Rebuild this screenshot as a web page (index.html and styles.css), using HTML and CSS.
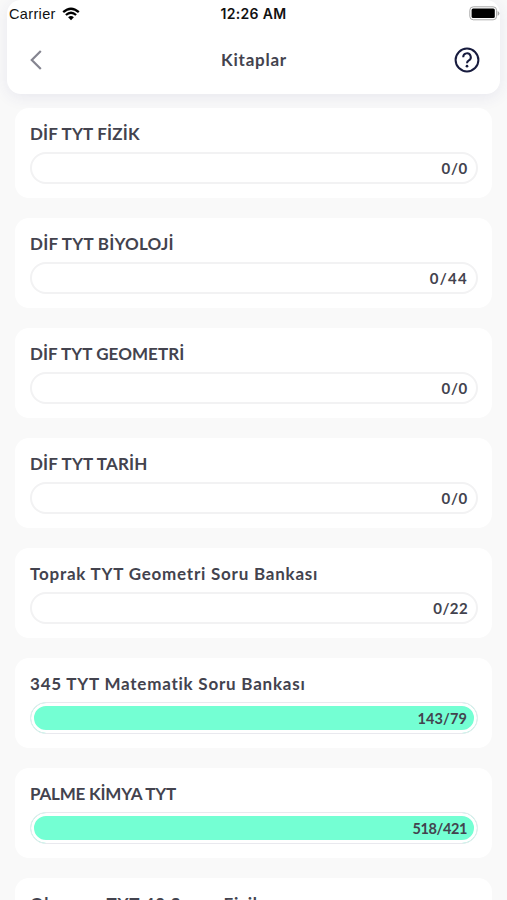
FILE: index.html
```html
<!DOCTYPE html>
<html lang="tr">
<head>
<meta charset="utf-8">
<title>Kitaplar</title>
<link rel="stylesheet" href="styles.css">
</head>
<body>
<header class="header">
  <div class="status">
    <div class="carrier"><span class="carrier-name">Carrier</span>
      <svg class="wifi" viewBox="0 0 18 14"><path d="M1.2 5.2Q9-1.7 16.8 5.2" /><path d="M3.9 8Q9 3.6 14.1 8"/><path class="solid" d="M9 13.2L6.1 10.3Q9 7.9 11.9 10.3Z"/></svg>
    </div>
    <span class="time">12:26 AM</span>
    <svg class="battery" viewBox="0 0 31 15"><rect class="shell" x=".8" y=".8" width="26.8" height="13" rx="3.5"/><rect class="charge" x="2.6" y="2.6" width="23.2" height="9.4" rx="1.5"/><path class="cap" d="M28.6 5Q30.4 5.8 30.4 7.4T28.6 9.8Z"/></svg>
  </div>
  <nav class="nav">
    <svg class="back" viewBox="0 0 12 20"><path d="M10.8 1L1.8 10L10.8 19"/></svg>
    <h1 class="title">Kitaplar</h1>
    <svg class="help" viewBox="0 0 26 26"><circle cx="13" cy="13" r="11.4"/><path d="M9.2 10.2A3.8 3.8 0 1 1 14.9 13.4C13.5 14.2 13 14.8 13 16.2"/><circle class="dot" cx="13" cy="19.2" r="1.35"/></svg>
  </nav>
</header>
<main class="list">
  <section class="card"><h2 class="name n1">DİF TYT FİZİK</h2><div class="bar"><span class="count">0/0</span></div></section>
  <section class="card"><h2 class="name n2">DİF TYT BİYOLOJİ</h2><div class="bar"><span class="count wide">0/44</span></div></section>
  <section class="card"><h2 class="name n3">DİF TYT GEOMETRİ</h2><div class="bar"><span class="count">0/0</span></div></section>
  <section class="card"><h2 class="name n1">DİF TYT TARİH</h2><div class="bar"><span class="count">0/0</span></div></section>
  <section class="card"><h2 class="name mixed">Toprak TYT Geometri Soru Bankası</h2><div class="bar"><span class="count snug">0/22</span></div></section>
  <section class="card"><h2 class="name mixed">345 TYT Matematik Soru Bankası</h2><div class="bar full"><span class="count tight">143/79</span></div></section>
  <section class="card"><h2 class="name n7">PALME KİMYA TYT</h2><div class="bar full"><span class="count tighter">518/421</span></div></section>
  <section class="card"><h2 class="name mixed">Okyanus TYT 40 Seans Fizik</h2></section>
</main>
</body>
</html>
```
FILE: styles.css
```css
* { box-sizing: border-box; }
body {
  display: flex;
  flex-direction: column;
  margin: 0;
  height: 900px;
  overflow: hidden;
  background: #f9f9f9;
  color: #43434e;
  font-family: Lato, "Noto Sans", sans-serif;
}
.header {
  flex: none;
  height: 94px;
  margin: 0 7px;
  background: #fff;
  border-radius: 14px;
  box-shadow: 0 3px 16px rgba(60, 60, 130, .09);
}
.status {
  display: grid;
  grid-template-columns: 1fr auto 1fr;
  align-items: center;
  height: 27px;
  padding-left: 2px;
  color: #111;
  font-family: Inter, sans-serif;
  font-size: 14px;
}
.carrier { display: flex; align-items: center; gap: 6px; }
.carrier-name { font-family: "Liberation Sans", sans-serif; font-size: 14.5px; letter-spacing: .35px; }
.wifi { width: 18px; height: 14px; fill: none; stroke: #000; stroke-width: 2.3; }
.wifi .solid { fill: #000; stroke: none; }
.time { margin-right: 2px; font-weight: 600; letter-spacing: .35px; }
.battery { justify-self: end; width: 31px; height: 15px; }
.shell { fill: #fff; stroke: #aaa; stroke-width: 1; }
.charge { fill: #000; }
.cap { fill: #aaa; }
.nav {
  display: grid;
  grid-template-columns: 1fr auto 1fr;
  align-items: center;
  height: 65px;
  padding: 0 20px 0 23px;
}
.back { width: 12px; height: 20px; fill: none; stroke: #858590; stroke-width: 2.2; }
.title { margin: 0 2px 0 0; font-size: 17px; font-weight: 700; letter-spacing: .75px; }
.help { justify-self: end; width: 26px; height: 26px; fill: none; stroke: #171b3e; stroke-width: 2; }
.help .dot { fill: #171b3e; stroke: none; }
.list {
  display: flex;
  flex: 1;
  flex-direction: column;
  gap: 20px;
  min-height: 0;
  padding: 14px 15px 0;
  overflow: hidden;
}
.card {
  flex: none;
  height: 90px;
  padding: 15px 14px 0 15px;
  background: #fff;
  border-radius: 14px;
}
.card:last-child { height: 22px; border-radius: 14px 14px 0 0; overflow: hidden; }
.name { margin: 0; height: 22px; line-height: 22px; font-size: 17px; font-weight: 700; white-space: nowrap; }
.n1 { letter-spacing: .18px; }
.n2 { letter-spacing: .24px; }
.n3 { letter-spacing: .05px; }
.n7 { letter-spacing: -.2px; }
.mixed { letter-spacing: .77px; }
.bar {
  display: flex;
  align-items: center;
  justify-content: flex-end;
  height: 32px;
  margin-top: 7px;
  padding-right: 8px;
  border: 2px solid #f2f2f3;
  border-radius: 16px;
}
.full { background: #74ffd3; border: 1px solid #e9e9ee; box-shadow: inset 0 0 0 3px #fff; padding-right: 10px; }
.count { font-size: 15px; font-weight: 700; letter-spacing: .7px; }
.wide { letter-spacing: 1.3px; }
.snug { letter-spacing: .4px; }
.tight { font-size: 14.5px; letter-spacing: .1px; }
.tighter { font-size: 14.5px; letter-spacing: -.4px; }
```
